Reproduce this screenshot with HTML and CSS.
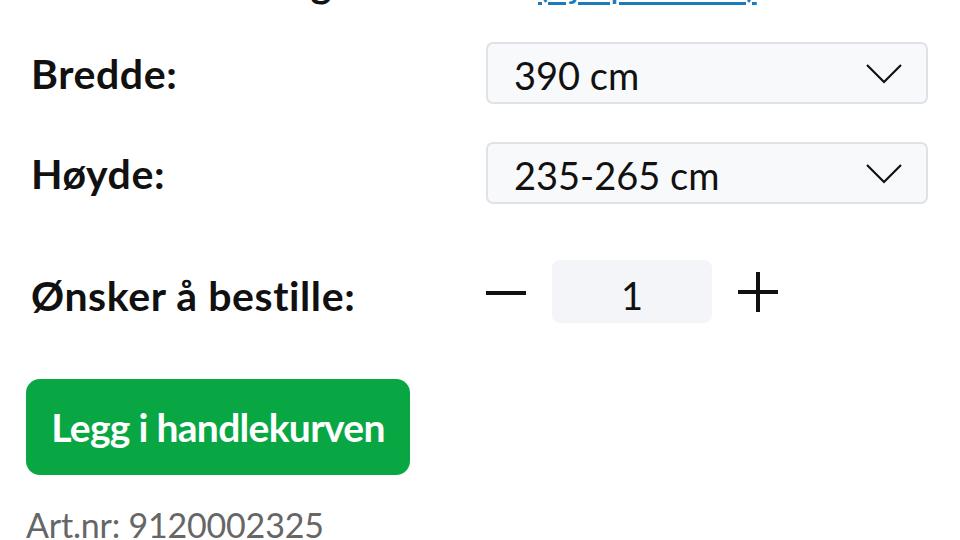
FILE: index.html
```html
<!DOCTYPE html>
<html lang="nb">
<head>
    <meta charset="UTF-8">
    <meta name="viewport" content="width=device-width, initial-scale=1.0">
    <title>Produkt</title>
    <link rel="stylesheet" href="styles.css">
</head>
<body>

    <div class="page">
        <div class="helper">
            <span class="helper-label">Festeanordning:</span>
            <a href="#" class="helper-link">(hjelp til mål)</a>
        </div>

        <div class="row row-size">
            <label class="label" for="bredde">Bredde:</label>
            <div class="select" id="bredde">
                <span>390 cm</span>
                <svg class="chevron" width="38" height="21" viewBox="0 0 38 21"><polyline points="2,2 19,19 36,2" fill="none" stroke="#111" stroke-width="2.2"/></svg>
            </div>
        </div>

        <div class="row row-size">
            <label class="label" for="hoyde">Høyde:</label>
            <div class="select" id="hoyde">
                <span>235-265 cm</span>
                <svg class="chevron" width="38" height="21" viewBox="0 0 38 21"><polyline points="2,2 19,19 36,2" fill="none" stroke="#111" stroke-width="2.2"/></svg>
            </div>
        </div>

        <div class="row row-qty">
            <span class="label">Ønsker å bestille:</span>
            <div class="stepper">
                <button class="step" type="button" aria-label="Minus">
                    <svg width="40" height="40" viewBox="0 0 40 40"><line x1="0" y1="20" x2="40" y2="20" stroke="#111" stroke-width="4"/></svg>
                </button>
                <div class="qty">1</div>
                <button class="step" type="button" aria-label="Pluss">
                    <svg width="40" height="40" viewBox="0 0 40 40"><line x1="0" y1="20" x2="40" y2="20" stroke="#111" stroke-width="4"/><line x1="20" y1="0" x2="20" y2="40" stroke="#111" stroke-width="4"/></svg>
                </button>
            </div>
        </div>

        <button class="btn" type="button">Legg i handlekurven</button>

        <p class="artnr">Art.nr: 9120002325</p>
    </div>

</body>
</html>
```

FILE: styles.css
```css
*{
    margin: 0;
    padding: 0;
    box-sizing: border-box;
}
body{
    font-family: Lato, "Open Sans", sans-serif;
    color: #111;
    background-color: #fff;
    overflow: hidden;
}
.page{
    padding: 0 32px 0 26px;
}
.helper{
    display: grid;
    grid-template-columns: 460px 1fr;
    margin-top: -38px;
    height: 42px;
    line-height: 40px;
    font-size: 40px;
    white-space: nowrap;
}
.helper-label{
    font-weight: 700;
    padding-left: 24px;
    letter-spacing: 0.5px;
}
.helper-link{
    color: #1b7bbd;
    font-size: 38px;
    letter-spacing: 0.5px;
    margin-left: 52px;
    text-decoration: underline;
    text-decoration-thickness: 3px;
    text-underline-offset: 5px;
}
.row{
    display: grid;
    grid-template-columns: 460px 442px;
    align-items: center;
}
.row-size{
    height: 62px;
    margin-top: 38px;
}
.row-qty{
    height: 63px;
    margin-top: 56px;
}
.label{
    font-size: 41px;
    font-weight: 700;
    line-height: 1;
    letter-spacing: 0.6px;
    padding-left: 5px;
}
.row-qty .label{
    padding-top: 7px;
}
.select{
    height: 62px;
    display: flex;
    align-items: center;
    justify-content: space-between;
    background-color: #f8f9fb;
    border: 2px solid #dfe2e6;
    border-radius: 7px;
    padding: 0 23px 0 26px;
    font-size: 38px;
    line-height: 1;
}
.select span{
    padding-top: 4px;
}
.stepper{
    display: flex;
    align-items: center;
    gap: 26px;
}
.step{
    width: 40px;
    height: 40px;
    border: none;
    background: transparent;
    display: flex;
    cursor: pointer;
}
.step:first-child{
    margin-top: 2px;
}
.qty{
    width: 160px;
    height: 63px;
    background-color: #f3f5f9;
    border-radius: 8px;
    display: flex;
    align-items: center;
    justify-content: center;
    font-size: 38px;
    padding-top: 6px;
}
.btn{
    display: block;
    width: 384px;
    height: 96px;
    margin-top: 56px;
    background-color: #09a744;
    border: none;
    border-radius: 14px;
    color: #fff;
    font-family: Lato, "Open Sans", sans-serif;
    font-size: 39px;
    font-weight: 700;
    letter-spacing: -0.7px;
    cursor: pointer;
}
.artnr{
    margin-top: 30px;
    font-size: 34px;
    line-height: 1.2;
    letter-spacing: -0.2px;
    color: #666;
}
```
